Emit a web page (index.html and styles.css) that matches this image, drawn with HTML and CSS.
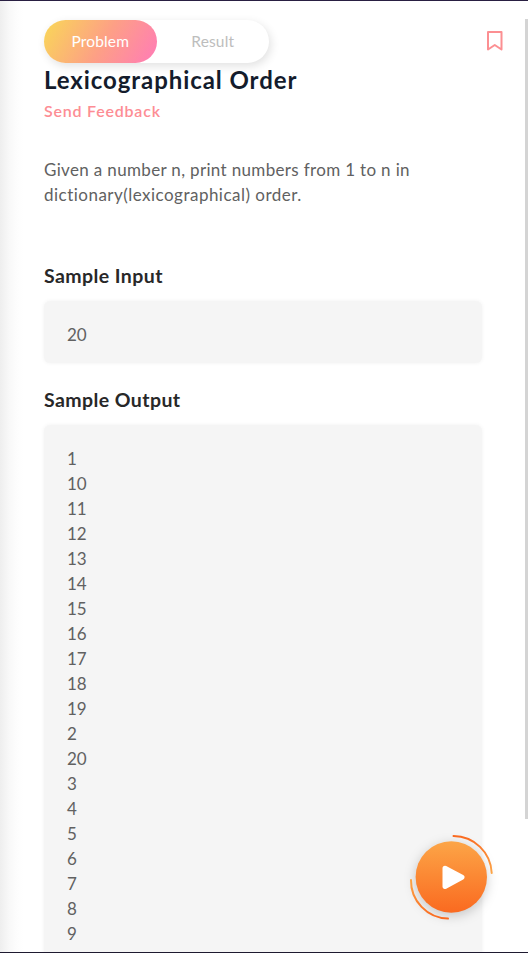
FILE: index.html
```html
<!DOCTYPE html>
<html lang="en">
<head>
<meta charset="utf-8">
<title>Lexicographical Order</title>
<link rel="stylesheet" href="styles.css">
</head>
<body>
<main class="panel">
  <header class="toolbar">
    <nav class="tabs">
      <button class="tab tab-active">Problem</button>
      <button class="tab">Result</button>
    </nav>
    <svg class="bookmark" viewBox="0 0 18 22" width="18" height="22"><path d="M2 2H15.5V19.5L8.75 15L2 19.5Z" fill="none" stroke="#fc8f92" stroke-width="2" stroke-linejoin="round"/></svg>
  </header>
  <h1 class="title">Lexicographical Order</h1>
  <a class="feedback">Send Feedback</a>
  <p class="statement"><span class="line-one">Given a number n, print numbers from 1 to n in</span><br><span class="line-two">dictionary(lexicographical) order.</span></p>
  <h2 class="heading heading-input">Sample Input</h2>
  <pre class="sample">20</pre>
  <h2 class="heading heading-output">Sample Output</h2>
  <pre class="sample sample-output">1
10
11
12
13
14
15
16
17
18
19
2
20
3
4
5
6
7
8
9</pre>
</main>
<div class="scrollbar"></div>
<svg class="run" viewBox="0 0 100 100" width="100" height="100">
  <defs>
    <linearGradient id="fill" x1="0" y1="0" x2="0" y2="1"><stop offset="0" stop-color="#fca547"/><stop offset="1" stop-color="#fa6a20"/></linearGradient>
    <linearGradient id="arc-top" x1="0" y1="0" x2="0" y2="1"><stop offset="0" stop-color="#fa6a20"/><stop offset="1" stop-color="#fca547"/></linearGradient>
    <linearGradient id="arc-bottom" x1="0" y1="0" x2="0" y2="1"><stop offset="0" stop-color="#fca547"/><stop offset="1" stop-color="#fa6a20"/></linearGradient>
  </defs>
  <circle class="run-disc" cx="51.3" cy="50" r="35.7" fill="url(#fill)"/>
  <path d="M53.5 9A38.5 38.5 0 0 1 91.7 46" fill="none" stroke="url(#arc-top)" stroke-width="2" stroke-linecap="round"/>
  <path d="M11 53A38 38 0 0 0 48 91.6" fill="none" stroke="url(#arc-bottom)" stroke-width="2" stroke-linecap="round"/>
  <path d="M45 41.2L62 50.3L45 59.5Z" fill="#fff" stroke="#fff" stroke-width="5" stroke-linejoin="round"/>
</svg>
<div class="bottom-edge"></div>
</body>
</html>
```
FILE: styles.css
```css
* { box-sizing: border-box; }
body {
  margin: 0;
  height: 953px;
  overflow: hidden;
  position: relative;
  background: #fff;
  font-family: Lato, "Open Sans", sans-serif;
}
.panel {
  height: 953px;
  overflow: hidden;
  padding: 19px 46px 0 44px;
  border-top: 1px solid #291f42;
  background: linear-gradient(90deg, #eee 0, #f8f8f8 9px, #fdfdfd 17px, #fff 24px);
}
.toolbar {
  display: flex;
  justify-content: space-between;
  height: 43px;
  margin-right: -24px;
}
.tabs {
  display: flex;
  width: 225px;
  border-radius: 22px;
  background: #fff;
  box-shadow: 2px 3px 10px rgba(0, 0, 0, .12);
}
.tab {
  flex: 1;
  padding: 0;
  border: 0;
  border-radius: 22px;
  background: none;
  color: #bdbdbd;
  font: 400 15.5px/43px Lato, sans-serif;
  letter-spacing: .15px;
}
.tab-active {
  color: #fff;
  background: linear-gradient(120deg, #f9d857 0%, #fda085 52%, #ff7eb3 96%);
}
.bookmark { margin-top: 10px; margin-right: 2px; }
.title {
  margin: 0;
  color: #141c2c;
  font-size: 24px;
  line-height: 34px;
  font-weight: 700;
  letter-spacing: .93px;
}
.feedback {
  display: block;
  margin-top: 1px;
  color: #fd8d94;
  font-size: 16px;
  line-height: 26px;
  font-weight: 600;
  letter-spacing: .78px;
}
.statement {
  margin: 33px 0 0;
  color: #616161;
  font-size: 17px;
  line-height: 25px;
  white-space: nowrap;
}
.line-one { letter-spacing: .34px; }
.line-two { letter-spacing: .48px; }
.heading {
  margin: 0;
  color: #282828;
  font-size: 19.5px;
  line-height: 30px;
  font-weight: 700;
  letter-spacing: .42px;
}
.heading-input { margin-top: 54px; }
.heading-output { margin-top: 22px; }
.sample {
  margin: 10px 0 0;
  width: 438px;
  height: 62px;
  padding: 21px 23px;
  border-radius: 6px;
  background: #f5f5f5;
  box-shadow: 0 0 4px rgba(0, 0, 0, .06);
  color: #616161;
  font: 400 17px/25px Lato, sans-serif;
}
.sample-output { height: 560px; }
.scrollbar {
  position: absolute;
  top: 19px;
  right: 0;
  width: 3px;
  height: 800px;
  background: #d4d4d4;
}
.run {
  position: absolute;
  left: 400px;
  top: 827px;
  overflow: visible;
}
.run-disc { filter: drop-shadow(0 3px 6px rgba(0, 0, 0, .2)); }
.bottom-edge {
  position: absolute;
  bottom: 0;
  left: 0;
  width: 100%;
  height: 1px;
  background: #1e1a30;
}
```
